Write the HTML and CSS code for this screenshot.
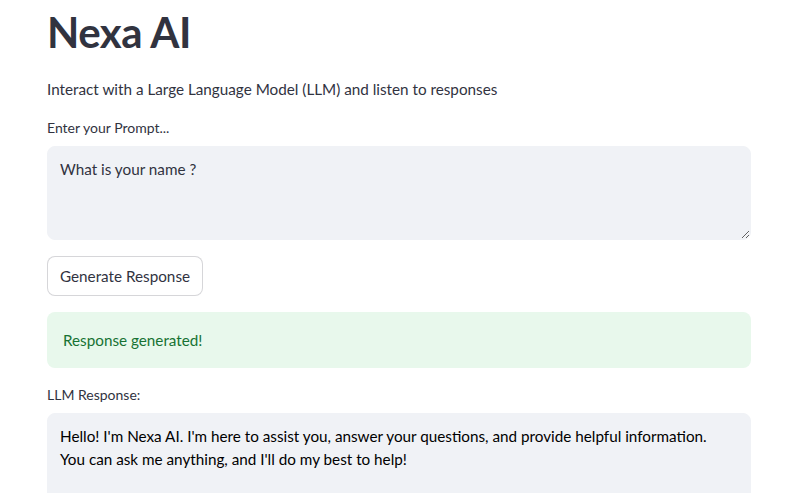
FILE: index.html
```html
<!DOCTYPE html>
<html lang="en">
<head>
<meta charset="utf-8">
<title>Nexa AI</title>
<link rel="stylesheet" href="styles.css">
</head>
<body>
<main class="main">
  <h1 class="title">Nexa AI</h1>
  <p class="subtitle">Interact with a Large Language Model (LLM) and listen to responses</p>
  <div class="field">
    <label class="label" for="prompt">Enter your Prompt...</label>
    <textarea id="prompt" class="textarea prompt">What is your name ?</textarea>
  </div>
  <div class="button-row">
    <button class="button" type="button">Generate Response</button>
  </div>
  <div class="alert">Response generated!</div>
  <div class="field">
    <label class="label" for="resp">LLM Response:</label>
    <textarea id="resp" class="textarea response">Hello! I'm Nexa AI. I'm here to assist you, answer your questions, and provide helpful information. You can ask me anything, and I'll do my best to help!</textarea>
  </div>
</main>
</body>
</html>
```
FILE: styles.css
```css
html, body {
  margin: 0;
  padding: 0;
  background: #ffffff;
}
body {
  font-family: "Lato", "Liberation Sans", sans-serif;
  color: #31333f;
  overflow: hidden;
}
.main {
  width: 704px;
  margin: 0 0 0 47px;
  padding-top: 5px;
  display: flex;
  flex-direction: column;
}
.title {
  margin: 0;
  font-size: 42px;
  font-weight: 700;
  line-height: 54px;
  letter-spacing: -0.5px;
  height: 54px;
}
.subtitle {
  margin: 18px 0 0 0;
  font-size: 15.25px;
  line-height: 24px;
}
.field {
  display: flex;
  flex-direction: column;
}
.label {
  font-size: 14px;
  line-height: 20px;
  margin-top: 17px;
  height: 20px;
  margin-bottom: 8px;
}
.textarea {
  box-sizing: border-box;
  width: 704px;
  border: 1px solid #f0f2f6;
  background: #f0f2f6;
  border-radius: 8px;
  font-family: inherit;
  font-size: 15.25px;
  line-height: 23px;
  color: #31333f;
  padding: 11px 12px;
  resize: vertical;
  outline: none;
}
.prompt {
  height: 94px;
}
.response {
  height: 110px;
  color: #000;
  padding-right: 36px;
}
.button-row {
  margin-top: 16px;
  display: flex;
}
.button {
  box-sizing: border-box;
  height: 40px;
  padding: 0 12px;
  background: #fff;
  border: 1px solid rgba(49, 51, 63, 0.2);
  border-radius: 8px;
  font-family: inherit;
  font-size: 15.25px;
  color: #31333f;
}
.alert {
  margin-top: 16px;
  box-sizing: border-box;
  height: 56px;
  background: #e8f8ec;
  border-radius: 8px;
  color: #177233;
  font-size: 15.25px;
  line-height: 24px;
  padding: 16px;
}
```
